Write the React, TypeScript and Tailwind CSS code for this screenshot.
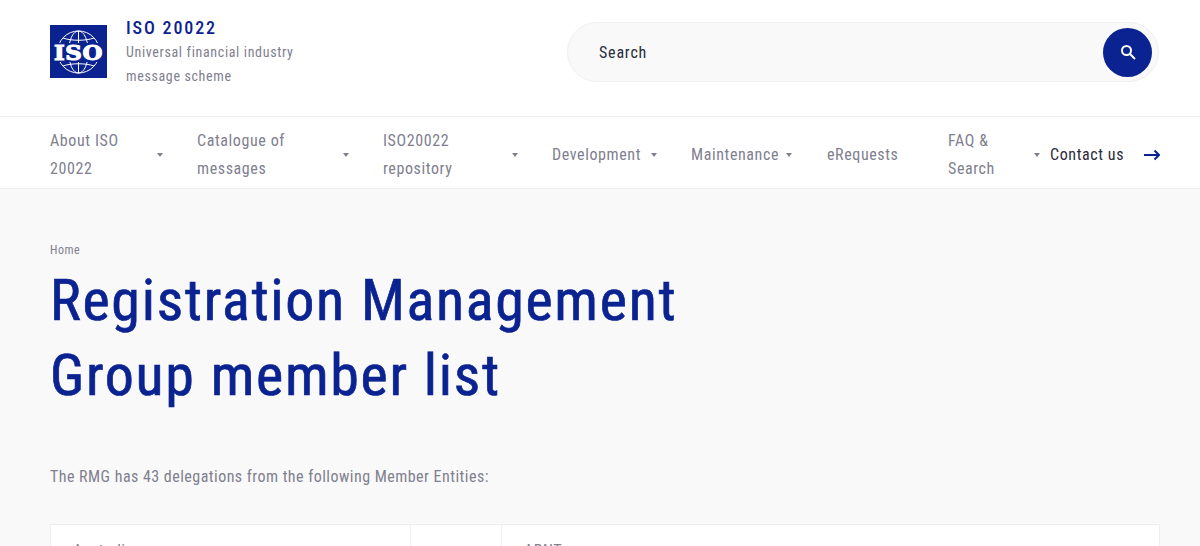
import React from 'react';

const NAV_ITEMS = [
  { label: 'About ISO 20022', item: 'w-[147px] pr-[34px]', text: 'w-[90px]', caret: true },
  { label: 'Catalogue of messages', item: 'w-[186px] pr-[34px]', text: 'w-[110px]', caret: true },
  { label: 'ISO20022 repository', item: 'w-[169px] pr-[34px]', text: 'w-[90px]', caret: true },
  { label: 'Development', item: 'w-[139px] pr-[34px]', text: 'w-auto', caret: true },
  { label: 'Maintenance', item: 'w-[136px] pr-[35px]', text: 'w-auto', caret: true },
  { label: 'eRequests', item: 'w-[121px]', text: 'w-auto', caret: false },
  { label: 'FAQ & Search', item: 'w-[102px] pr-[10px]', text: 'w-[60px]', caret: true },
];

function IsoLogo() {
  return (
    <svg viewBox="0 0 57 53" className="w-[57px] h-[53px] shrink-0">
      <rect width="57" height="53" fill="#0b2391" />
      <g fill="none" stroke="#fff" strokeWidth="1">
        <circle cx="28.5" cy="27" r="21" />
        <ellipse cx="28.5" cy="27" rx="10" ry="21" />
        <path d="M13 13c8 3 23 3 31 0M13 41c8-3 23-3 31 0M28.5 6v42" />
      </g>
      <rect x="3" y="18" width="51" height="19" fill="#0b2391" />
      <text
        x="28.5"
        y="35"
        textAnchor="middle"
        fill="#fff"
        stroke="#fff"
        strokeWidth="1"
        fontSize="21"
        fontWeight="700"
        fontFamily="'DejaVu Serif', serif"
        textLength="49"
        lengthAdjust="spacingAndGlyphs"
      >
        ISO
      </text>
    </svg>
  );
}

function Caret() {
  return <span className="w-0 h-0 border-x-[3px] border-x-transparent border-t-[4px] border-t-[#80808f]" />;
}

export default function App() {
  return (
    <div className="font-['Roboto',sans-serif] [font-stretch:86%] tracking-[0.5px] bg-[#f9f9f9] min-h-[546px] overflow-hidden">
      <header className="bg-white h-[117px] border-b border-[#eeeeee] pl-[50px] pr-[41px] pt-[14px] flex items-start justify-between">
        <div className="flex items-start gap-[19px]">
          <div className="pt-[11px]">
            <IsoLogo />
          </div>
          <div>
            <div className="text-[18px] leading-[28px] font-medium tracking-[1.85px] text-[#0b2391]">ISO 20022</div>
            <div className="-mt-[2px] text-[14px] leading-[24px] text-[#80808f] w-[180px] tracking-[0.65px]">
              Universal financial industry message scheme
            </div>
          </div>
        </div>
        <div className="w-[592px] h-[60px] mt-[8px] pt-[1px] rounded-full bg-[#f9f9f9] border border-[#f0f0f0] flex items-center justify-between pl-[31px] pr-[6px]">
          <span className="text-[16px] tracking-[0.8px] text-[#2b2b3c]">Search</span>
          <button className="w-[49px] h-[49px] -mt-[1px] rounded-full bg-[#0b2391] flex items-center justify-center">
            <svg viewBox="0 0 16 16" className="w-4 h-4" fill="none" stroke="#fff" strokeWidth="2">
              <circle cx="6.5" cy="6.5" r="4.5" />
              <path d="M10 10l5 5" />
            </svg>
          </button>
        </div>
      </header>

      <nav className="bg-white h-[72px] border-b border-[#eeeeee] pl-[50px] pr-[40px] pt-[4px] flex items-center justify-between text-[16px] leading-[28px] text-[#80808f] tracking-[0.6px]">
        <div className="flex items-center">
          {NAV_ITEMS.map((item) => (
            <div key={item.label} className={`flex items-center justify-between ${item.item}`}>
              <span className={item.text}>{item.label}</span>
              {item.caret && <Caret />}
            </div>
          ))}
        </div>
        <div className="flex items-center gap-[20px]">
          <span className="text-[#2b2b3c] whitespace-nowrap">Contact us</span>
          <svg viewBox="0 0 16 12" className="w-4 h-3 shrink-0" fill="none" stroke="#0b2391" strokeWidth="2">
            <path d="M0 6h15M10.5 1.5l4.5 4.5-4.5 4.5" />
          </svg>
        </div>
      </nav>

      <main className="pr-[41px] pt-[52px] pl-[50px]">
        <div className="text-[12px] leading-[18px] text-[#80808f]">Home</div>
        <h1 className="mt-[4px] text-[58px] leading-[75px] font-normal tracking-[1.7px] [-webkit-text-stroke:0.7px_#0b2391] text-[#0b2391] w-[700px]">
          Registration Management Group member list
        </h1>
        <p className="mt-[50px] text-[16px] leading-[28px] text-[#80808f] tracking-[0.47px]">
          The RMG has 43 delegations from the following Member Entities:
        </p>
        <div className="mt-[33px] w-[1110px] bg-white border border-[#eeeeee] grid grid-cols-[359px_92px_1fr] text-[16px] leading-[28px] text-[#80808f]">
          <div className="px-[22px] py-[12px]">Australia</div>
          <div className="border-x border-[#eeeeee]" />
          <div className="px-[22px] py-[12px]">ABNT</div>
        </div>
      </main>
    </div>
  );
}
